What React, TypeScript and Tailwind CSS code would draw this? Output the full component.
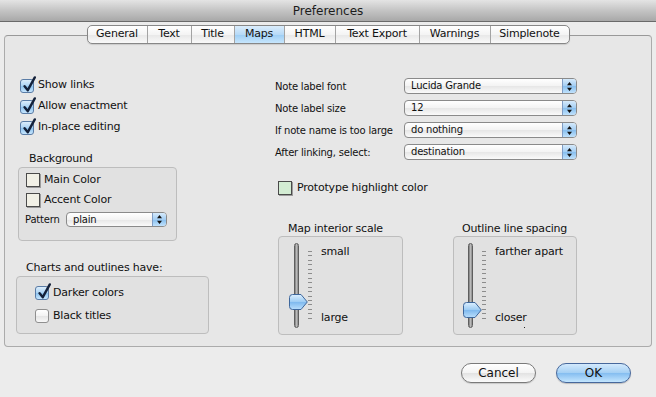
import React from "react";

const tabs = [
  { name: "General", w: "w-[59px]" },
  { name: "Text", w: "w-[44px]" },
  { name: "Title", w: "w-[43px]" },
  { name: "Maps", w: "w-[50px]", active: true },
  { name: "HTML", w: "w-[51px]" },
  { name: "Text Export", w: "w-[84px]" },
  { name: "Warnings", w: "w-[71px]" },
  { name: "Simplenote", w: "w-[79px]" },
];

const Check = ({ checked }: { checked: boolean }) => (
  <span
    className={`relative block w-[14px] h-[14px] shrink-0 rounded-[3px] border ${
      checked
        ? "border-[#5a7ca6] bg-[linear-gradient(to_bottom,#dcedfb,#a9d2f4_50%,#8cc3ef_51%,#c6e5fd)]"
        : "border-[#8f8f8f] bg-[linear-gradient(to_bottom,#ffffff,#f2f2f2_50%,#e4e4e4_51%,#f8f8f8)]"
    }`}
  >
    {checked && (
      <svg className="absolute left-[1px] top-[-4px]" width="15" height="17" viewBox="0 0 15 17">
        <path
          d="M2.6 10.2 L5.8 14.2 L12.8 1.4"
          fill="none"
          stroke="#14213a"
          strokeWidth="2.4"
          strokeLinecap="round"
          strokeLinejoin="round"
        />
      </svg>
    )}
  </span>
);

const Well = ({ color }: { color: string }) => (
  <span className={`block w-[14px] h-[14px] shrink-0 border border-[#4a4a4a] shadow-[1px_1px_0_#9c9c9c] ${color}`} />
);

const Popup = ({ value, w, h }: { value: string; w: string; h: string }) => (
  <div
    className={`${w} ${h} flex items-center overflow-hidden rounded-[4px] border border-[#8a8a8a] bg-[linear-gradient(to_bottom,#ffffff,#f3f3f3_50%,#e6e6e6_51%,#fafafa)]`}
  >
    <span className="flex-1 pl-[6px] text-[10px] leading-none tracking-[-0.2px] text-[#111]">{value}</span>
    <span className="flex h-full w-[14px] items-center justify-center border-l border-[#7f9cc4] bg-[linear-gradient(to_bottom,#d6eafb,#a2cdf3_50%,#86beee_51%,#c1e2fc)]">
      <svg width="5" height="9" viewBox="0 0 5 9">
        <path d="M2.5 0 L5 3.2 H0 Z M2.5 9 L5 5.8 H0 Z" fill="#111" />
      </svg>
    </span>
  </div>
);

const Thumb = ({ pos }: { pos: string }) => (
  <svg className={`absolute left-[-6px] ${pos}`} width="19" height="16" viewBox="0 0 19 16">
    <defs>
      <linearGradient id="thumbGrad" x1="0" y1="0" x2="0" y2="1">
        <stop offset="0" stopColor="#dcefff" />
        <stop offset="0.5" stopColor="#9ccbf3" />
        <stop offset="0.52" stopColor="#7fb9ee" />
        <stop offset="1" stopColor="#b9defc" />
      </linearGradient>
    </defs>
    <path
      d="M3.5 0.5 H12 L18.3 8 L12 15.5 H3.5 Q0.5 15.5 0.5 12.5 V3.5 Q0.5 0.5 3.5 0.5 Z"
      fill="url(#thumbGrad)"
      stroke="#3e679c"
    />
  </svg>
);

const Slider = ({ pl, pos, top, bottom }: { pl: string; pos: string; top: string; bottom: string }) => (
  <div className={`flex pt-[6px] ${pl}`}>
    <div className="relative h-[85px] w-[5px] rounded-full border border-[#5e5e5e] bg-[linear-gradient(to_right,#7a7a7a,#b9b9b9_50%,#8a8a8a)]">
      <Thumb pos={pos} />
    </div>
    <div className="ml-[9px] mt-[8px] flex h-[68px] w-[4px] flex-col justify-between">
      {Array.from({ length: 16 }).map((_, i) => (
        <span key={i} className="block h-[1px] w-[4px] bg-[#8c8c8c]" />
      ))}
    </div>
    <div className="relative ml-[9px] mt-[2px] flex h-[80px] flex-col justify-between leading-[14px]">
      <span>{top}</span>
      <span>{bottom}</span>
    </div>
  </div>
);

export default function App() {
  return (
    <div className="flex h-[397px] w-[656px] flex-col overflow-hidden bg-[#ececec] font-['DejaVu_Sans','Liberation_Sans',sans-serif] text-[11px] tracking-[-0.2px] text-[#111]">
      {/* title bar */}
      <div className="flex h-[22px] shrink-0 items-center justify-center border-b border-[#6a6a6a] bg-[linear-gradient(to_bottom,#e4e4e4,#c4c4c4_50%,#a8a8a8)] text-[12px] tracking-normal text-[#1c1c1c]">
        Preferences
      </div>

      {/* tabs */}
      <div className="relative z-10 mt-[3px] flex h-[19px] self-center overflow-hidden rounded-[5px] border border-[#878787] bg-[linear-gradient(to_bottom,#ffffff,#f4f4f4_50%,#e7e7e7_51%,#f9f9f9)] shadow-[0_1px_1px_rgba(0,0,0,0.12)]">
        {tabs.map((t, i) => (
          <div
            key={t.name}
            className={`${t.w} flex items-center justify-center ${i > 0 ? "border-l border-[#a3a3a3]" : ""} ${
              t.active ? "bg-[linear-gradient(to_bottom,#dbedfc,#b7daf7_50%,#9ccdf4_51%,#c7e6fd)]" : ""
            }`}
          >
            {t.name}
          </div>
        ))}
      </div>

      {/* tab panel */}
      <div className="mx-[4px] -mt-[9px] flex h-[312px] rounded-[4px] border border-[#ababab] border-t-[#999] bg-[#e7e7e7]">
        {/* left column */}
        <div className="flex w-[270px] shrink-0 flex-col pl-[13px] pt-[39px]">
          {["Show links", "Allow enactment", "In-place editing"].map((l) => (
            <div key={l} className="flex h-[21px] items-center gap-[4px] pl-[2px]">
              <Check checked />
              <span>{l}</span>
            </div>
          ))}

          <div className="mt-[14px] flex h-[15px] items-center pl-[11px]">Background</div>
          <div className="flex h-[74px] w-[159px] flex-col rounded-[4px] border border-[#bdbdbd] bg-[#e1e1e1] pt-[2px]">
            <div className="flex h-[20px] items-center gap-[4px] pl-[7px]">
              <Well color="bg-[#f1f0e6]" />
              <span>Main Color</span>
            </div>
            <div className="flex h-[20px] items-center gap-[4px] pl-[7px]">
              <Well color="bg-[#f1f0e6]" />
              <span>Accent Color</span>
            </div>
            <div className="flex h-[19px] items-center pl-[6px]">
              <span className="w-[41px] text-[10px]">Pattern</span>
              <Popup value="plain" w="w-[101px]" h="h-[15px]" />
            </div>
          </div>

          <div className="mt-[20px] flex h-[15px] items-center pl-[8px]">Charts and outlines have:</div>
          <div className="-ml-[2px] flex h-[58px] w-[193px] flex-col gap-[3px] rounded-[4px] border border-[#bdbdbd] bg-[#e1e1e1] pl-[18px] pt-[6px]">
            <div className="flex h-[20px] items-center gap-[4px]">
              <Check checked />
              <span>Darker colors</span>
            </div>
            <div className="flex h-[20px] items-center gap-[4px]">
              <Check checked={false} />
              <span>Black titles</span>
            </div>
          </div>
        </div>

        {/* right column */}
        <div className="flex flex-col pt-[39px]">
          {[
            ["Note label font", "Lucida Grande"],
            ["Note label size", "12"],
            ["If note name is too large", "do nothing"],
            ["After linking, select:", "destination"],
          ].map(([label, value]) => (
            <div key={label} className="flex h-[22px] items-center">
              <span className="w-[129px] text-[10px]">{label}</span>
              <Popup value={value} w="w-[173px]" h="h-[16px]" />
            </div>
          ))}

          <div className="mt-[18px] flex h-[14px] items-center gap-[5px] pl-[3px]">
            <Well color="bg-[#d3ecd3]" />
            <span>Prototype highlight color</span>
          </div>

          <div className="mt-[27px] flex gap-[50px] pl-[3px]">
            <div className="flex flex-col">
              <div className="flex h-[14px] items-center pl-[10px]">Map interior scale</div>
              <div className="h-[99px] w-[125px] rounded-[4px] border border-[#bdbdbd] bg-[#e1e1e1]">
                <Slider pl="pl-[15px]" pos="top-[50px]" top="small" bottom="large" />
              </div>
            </div>
            <div className="flex flex-col">
              <div className="flex h-[14px] items-center pl-[9px]">Outline line spacing</div>
              <div className="relative h-[99px] w-[124px] rounded-[4px] border border-[#bdbdbd] bg-[#e1e1e1]">
                <Slider pl="pl-[14px]" pos="top-[58px]" top="farther apart" bottom="closer" />
                <span className="absolute left-[70px] top-[90px] block h-[1px] w-[1px] bg-[#222]" />
              </div>
            </div>
          </div>
        </div>
      </div>

      {/* buttons */}
      <div className="mt-[16px] flex justify-end gap-[20px] pr-[25px] text-[12px] tracking-normal">
        <button className="flex h-[20px] w-[75px] items-center justify-center rounded-full border border-[#7a7a7a] bg-[linear-gradient(to_bottom,#ffffff,#f3f3f3_50%,#e2e2e2_51%,#fbfbfb)] shadow-[0_1px_1px_rgba(0,0,0,0.15)]">
          Cancel
        </button>
        <button className="flex h-[20px] w-[75px] items-center justify-center rounded-full border border-[#47689c] bg-[linear-gradient(to_bottom,#d3e9fc,#a3cff4_50%,#84bdf0_51%,#c3e5fe)] shadow-[0_1px_1px_rgba(0,0,0,0.2)]">
          OK
        </button>
      </div>
    </div>
  );
}
